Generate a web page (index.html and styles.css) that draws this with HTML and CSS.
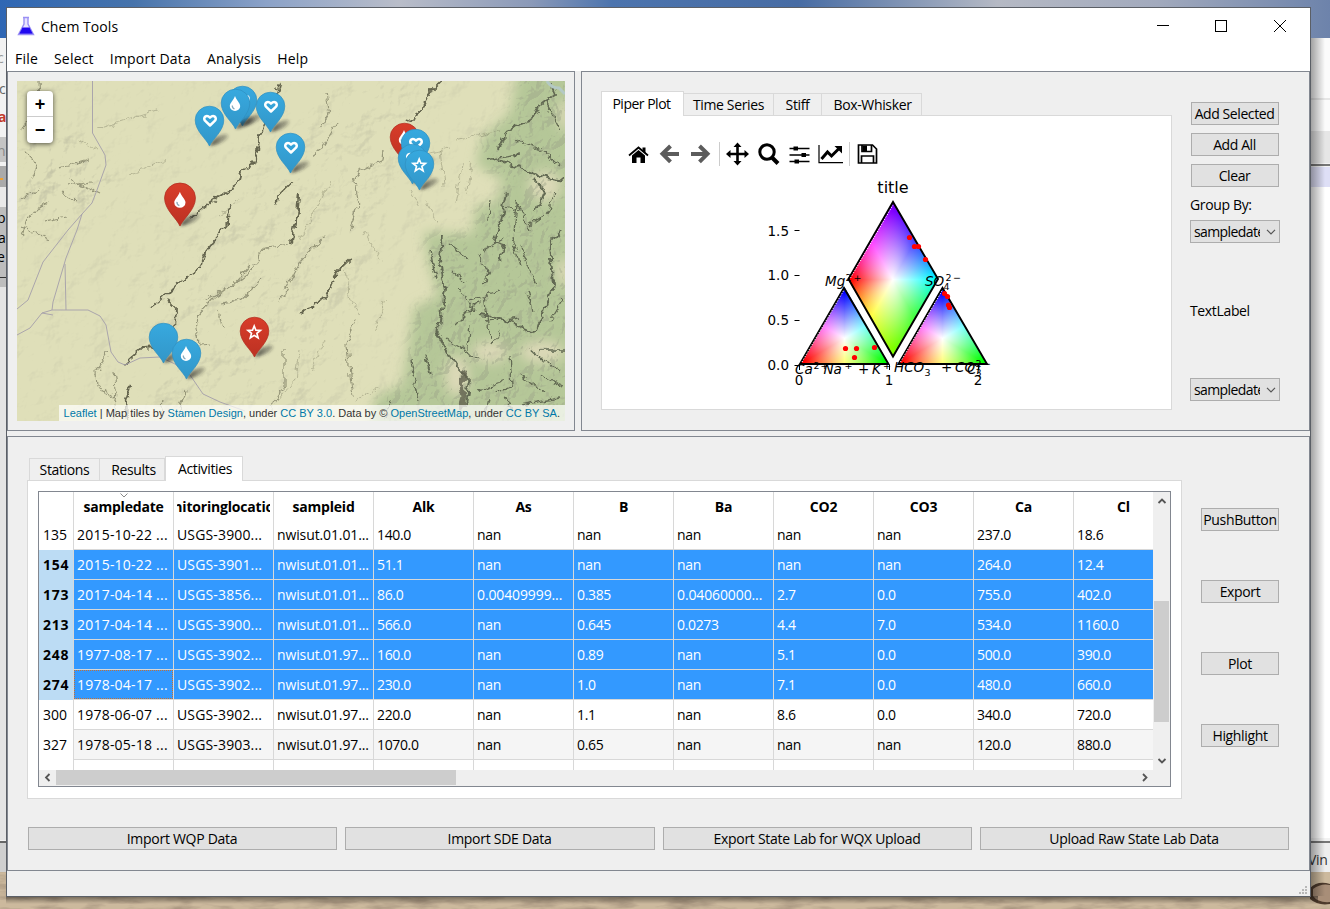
FILE: index.html
```html
<!DOCTYPE html>
<html lang="en">
<head>
<meta charset="utf-8">
<title>Chem Tools</title>
<link rel="stylesheet" href="styles.css">
</head>
<body>
<div class="desktop">
<svg class="backdrop" width="1330" height="909" viewBox="0 0 1330 909">
  <defs>
    <linearGradient id="sky"><stop offset="0" stop-color="#2f67b4"/><stop offset=".1" stop-color="#4673ab"/><stop offset=".2" stop-color="#8ba2c8"/><stop offset=".3" stop-color="#b9bdc9"/><stop offset=".4" stop-color="#8a99b8"/><stop offset=".46" stop-color="#4c74ae"/><stop offset=".6" stop-color="#476ca4"/><stop offset=".75" stop-color="#b5b9c4"/><stop offset=".87" stop-color="#a2aabd"/><stop offset="1" stop-color="#6d83ab"/></linearGradient>
    <filter id="sandTex" x="0" y="0" width="100%" height="100%"><feTurbulence type="fractalNoise" baseFrequency=".03 .12" numOctaves="4" seed="8"/><feColorMatrix values="0 0 0 0 .4  0 0 0 0 .31  0 0 0 0 .22  2.4 0 0 0 -1"/></filter>
    <linearGradient id="shR"><stop offset="0" stop-color="#000" stop-opacity=".38"/><stop offset="1" stop-color="#000" stop-opacity="0"/></linearGradient>
    <linearGradient id="shB" x2="0" y2="1"><stop offset="0" stop-color="#000" stop-opacity=".45"/><stop offset="1" stop-color="#000" stop-opacity="0"/></linearGradient>
  </defs>
  <rect width="1330" height="38" fill="url(#sky)"/>
  <rect y="38" width="1330" height="835" fill="#f2f2f2"/>
  <rect y="137" width="10" height="25" fill="#c4c4c4"/><rect y="166" width="10" height="21" fill="#aaa"/>
  <rect y="187" width="10" height="20" fill="#e9e9e9"/><rect y="207" width="10" height="80" fill="#bdbdbd"/>
  <rect y="287" width="10" height="553" fill="#e4e4e4"/><rect y="841" width="10" height="2" fill="#666"/><rect y="843" width="10" height="29" fill="#cfcfcf"/>
  <rect x="1310" y="38" width="20" height="93" fill="#fbfbfb"/><rect x="1310" y="98" width="20" height="2" fill="#e6e6e6"/>
  <rect x="1310" y="131" width="20" height="32" fill="#e6e6e6"/><rect x="1310" y="164" width="20" height="2" fill="#777"/>
  <rect x="1310" y="167" width="20" height="20" fill="#dedff6"/><rect x="1310" y="187" width="20" height="651" fill="#fff"/>
  <rect x="1310" y="841" width="20" height="2" fill="#777"/><rect x="1310" y="843" width="20" height="29" fill="#eee"/>
  <rect y="872" width="1330" height="37" fill="#ccb99d"/><rect y="872" width="1330" height="37" filter="url(#sandTex)"/>
  <path d="M1310 888q8-8 20-4v20q-12 2-20-5z" fill="#4d3a2c"/><path d="M1313 889q8-6 17-4v17q-12 1-17-6z" fill="#a88e78"/>
  <g font-family="Open Sans, sans-serif" font-size="14"><text x="-3" y="63" fill="#999">c</text><text x="-1" y="94" fill="#666">c</text><text x="-2" y="122" fill="#c23b2e" font-weight="700">a</text><text x="-3" y="156" fill="#888">n</text><text x="-3" y="223">p</text><text x="-2" y="243">a</text><text x="-3" y="262">e</text><text x="1308" y="865" fill="#333">Vin</text></g>
  <rect x="0" y="178" width="3" height="2" fill="#f0a030"/><rect y="277" width="6" height="1" fill="#333"/>
  <rect x="1310" y="38" width="15" height="858" fill="url(#shR)"/><rect x="6" y="896" width="1312" height="8" fill="url(#shB)"/>
</svg>

<div class="window">
  <header class="titlebar">
    <svg class="flask" width="18" height="20" viewBox="0 0 18 20"><path d="M6 1.500h6M7 2v6L1.500 18.500h15L11 8V2" fill="#e8e4ff" stroke="#9a90f4" stroke-width="1.400"/><path d="M5.500 11.500h7l3.200 6.200H2.300z" fill="#2008f0"/></svg>
    <span class="caption">Chem Tools</span>
    <svg class="winbtns" width="130" height="14" viewBox="0 0 130 14" fill="none" stroke="#000" stroke-width="1"><path d="M0 6.500h12"/><rect x="58.500" y="1.500" width="11" height="11"/><path d="M117 1l12 12M129 1l-12 12"/></svg>
  </header>
  <nav class="menubar"><span>File</span><span>Select</span><span>Import Data</span><span>Analysis</span><span>Help</span></nav>

  <div class="top-split">
    <section class="frame map-frame">
      <div class="map">
      <svg width="548" height="340" viewBox="17 81 548 340">
        <defs>
          <filter id="soft" x="-20%" y="-20%" width="140%" height="140%"><feGaussianBlur stdDeviation="6"/></filter>
          <filter id="relief" x="0" y="0" width="100%" height="100%"><feTurbulence type="fractalNoise" baseFrequency=".03" numOctaves="5" seed="14"/><feColorMatrix values="0 0 0 0 0 0 0 0 0 0 0 0 0 0 0 1 0 0 0 0"/><feDiffuseLighting surfaceScale="6" lighting-color="#fff" result="l"><feDistantLight azimuth="225" elevation="50"/></feDiffuseLighting><feColorMatrix values="0 0 0 0 .36 0 0 0 0 .36 0 0 0 0 .28 -3 0 0 0 2.1"/></filter>
          <filter id="relief2" x="0" y="0" width="100%" height="100%"><feTurbulence type="turbulence" baseFrequency=".045 .04" numOctaves="4" seed="21"/><feColorMatrix values="0 0 0 0 0 0 0 0 0 0 0 0 0 0 0 1 0 0 0 0"/><feDiffuseLighting surfaceScale="8" lighting-color="#fff"><feDistantLight azimuth="215" elevation="52"/></feDiffuseLighting><feColorMatrix values="0 0 0 0 .33 0 0 0 0 .36 0 0 0 0 .25 -3.5 0 0 0 1.75"/></filter>
          <filter id="rough" x="-5%" y="-5%" width="110%" height="110%"><feTurbulence type="fractalNoise" baseFrequency=".12" numOctaves="3" seed="3"/><feDisplacementMap in="SourceGraphic" scale="9" xChannelSelector="R" yChannelSelector="G"/><feGaussianBlur stdDeviation=".45"/></filter>
          <filter id="blur2" x="-40%" y="-60%" width="180%" height="220%"><feGaussianBlur stdDeviation="1.700"/></filter>
          <mask id="greenMask"><use href="#forest" fill="#fff" filter="url(#soft)"/></mask>
          <mask id="westMask"><g fill="#fff" filter="url(#soft)"><path d="M17 215h35l55-10 5-35-40-35-55 10z"/><path d="M150 421V290L300 130l60-49h60l-40 140-60 200z" opacity=".4"/></g></mask>
          <path id="forest" d="M518 70L510 112 482 138 476 165 503 180 495 202 476 207 472 234 424 232 428 262 438 296 414 308 402 385 376 396 368 430H575V70z"/>
          <linearGradient id="gb" x2="0" y2="1"><stop offset="0" stop-color="#37a9df"/><stop offset="1" stop-color="#3296c8"/></linearGradient>
          <linearGradient id="gr" x2="0" y2="1"><stop offset="0" stop-color="#d83d2a"/><stop offset="1" stop-color="#bc3122"/></linearGradient>
          <linearGradient id="gs"><stop offset="0" stop-color="#222" stop-opacity=".75"/><stop offset="1" stop-color="#222" stop-opacity=".2"/></linearGradient>
          <g id="shade"><path d="M0 0Q5-11 16-12 22-11 16-6 9-1 0 0z" fill="url(#gs)" filter="url(#blur2)"/></g>
          <path id="pin" d="M0 0C-3-7-14.300-15-14.300-26A14.300 13.800 0 0 1 14.300-26C14.300-15 3-7 0 0z"/>
          <g id="blue"><use href="#shade"/><use href="#pin" fill="url(#gb)" stroke="#2f8fc0" stroke-width=".7"/></g>
          <g id="red"><use href="#shade"/><use href="#pin" fill="url(#gr)" stroke="#b02d20" stroke-width=".7"/></g>
          <path id="heart" d="M.5-20.500L-4.500-25.300C-7-28.500-3-32 .5-28.300 4-32 8-28.500 5.500-25.300z" fill="none" stroke="#fff" stroke-width="2.500" stroke-linejoin="round"/>
          <g id="drop"><path d="M-.5-33C1-28.500 4.700-26 4.700-23A5.200 5 0 0 1-5.700-23C-5.700-26-2-28.500-.5-33z" fill="#fff"/><path d="M-3.200-23.500Q-3.400-21-1-20" fill="none" stroke="#8ab" stroke-width="1.200"/></g>
          <path id="star" d="M-.3-31L1.400-26.800 5.900-26.500 2.400-23.600 3.600-19.200-.3-21.600-4.200-19.200-3-23.600-6.500-26.500-2-26.800z" fill="none" stroke="#fff" stroke-width="1.700"/>
        </defs>
        <rect x="17" y="81" width="548" height="340" fill="#dfdfb9"/>
        <use href="#forest" fill="#b5c798" filter="url(#soft)"/>
        <g fill="#dcd9b7" filter="url(#soft)"><ellipse cx="545" cy="186" rx="16" ry="15"/><ellipse cx="490" cy="352" rx="18" ry="11"/><ellipse cx="542" cy="352" rx="22" ry="11"/><ellipse cx="564" cy="272" rx="7" ry="14"/><ellipse cx="457" cy="376" rx="12" ry="20"/><ellipse cx="564" cy="115" rx="6" ry="16"/></g>
        <rect x="17" y="81" width="548" height="340" filter="url(#relief)" opacity=".14"/>
        <g mask="url(#westMask)"><rect x="17" y="81" width="548" height="340" filter="url(#relief)" opacity=".3"/></g>
        <g mask="url(#greenMask)"><rect x="17" y="81" width="548" height="340" filter="url(#relief2)" opacity=".42"/></g>
        <g fill="none" stroke="#66664f" stroke-linejoin="round" filter="url(#rough)">
          <g stroke-width="1.900"><path d="M280 83L276 98 263 125 259 140 258 152 252 165 240 172 236 186 226 192 211 202 199 211 191 218"/><path d="M229 205L228 224 206 250 200 268 181 281 161 300 151 308"/><path d="M441 81L432 90 421 112 408 121"/><path d="M351 259L336 273 325 298 302 313"/><path d="M292 182L278 196 275 206"/><path d="M299 194L297 217 291 245" stroke-width="2.500"/><path d="M124 364L142 348 156 347"/><path d="M168 300L176 308 175 330"/><path d="M131 386L126 400 127 419" stroke-width="2.500"/></g>
          <g stroke-width="1.200" opacity=".6"><path d="M384 151L383 160 361 170 355 181 359 206 349 230"/><path d="M336 124L322 148 311 156"/><path d="M326 94L330 113 320 128"/><path d="M109 353L96 372 97 386 114 397"/><path d="M114 370L116 390 113 419"/><path d="M290 245L265 248 252 270 215 297 196 318 199 345 212 344"/><path d="M355 318L347 345 350 375 353 395"/><path d="M284 350L284 387 273 405"/><path d="M40 81L41 103 30 115 22 131"/><path d="M24 151L38 165 32 180M70 180L100 194M48 202L30 215 22 235M62 192L75 200M60 168L88 160M20 200L40 190M45 222L68 218M20 225L48 240M66 186L92 182"/><path d="M185 391L180 410M162 400L159 421M262 280L240 300 222 304M250 265L232 285 205 300M218 310L222 330M325 235L300 262 280 300"/></g>
          <g stroke-width="1" opacity=".35"><path d="M455 140L500 130M462 165L456 205M472 160L466 195M440 150L444 185M425 200L438 222M405 160L450 148M420 205L410 190M345 270L350 300 360 315M385 300L375 330M365 230L380 260M240 200L220 215M300 350L296 380 270 410M310 370L325 340M355 400L380 388M330 180L300 240M100 128L160 110M128 175L165 160M80 140L96 150"/></g>
        </g>
        <g fill="none" stroke="#626952" stroke-width="1.900" filter="url(#rough)"><path d="M551 83L555 94 538 107 531 120 506 130 498 150M506 193L500 222 494 242 505 245 498 260M534 180L545 190 536 211M500 160L540 176 563 181M442 235L440 260 445 290 438 335 455 365 470 380 466 405M562 230L550 245 553 285 541 320 533 332 505 320 480 315"/>
        <path stroke-width="1.300" d="M520 245L536 285M484 295L490 340M510 355L512 385 495 392M470 300L500 290M565 350L540 350M490 200L488 220M515 200L530 230M478 255L490 275 482 285M520 265L512 240M450 245L470 260M452 270L466 282M455 325L480 300M500 330L492 345M530 350L560 372M520 375L545 392M480 390L505 380M520 405L560 398M448 340L480 360M425 355L432 375M410 360L418 400M390 400L384 418M545 100L560 130M515 140L540 150M485 160L520 155M545 215L530 225M560 165L540 150M517 205L514 232M527 290L532 312M460 290L474 310M470 325L468 350M484 250L505 238M505 205L525 215M555 195L548 215M550 320L562 300M486 322L520 318M488 400L484 418M540 375L562 385M430 250L436 280M505 395L512 412"/></g>
        <path d="M466 370L461 382 464 396 460 410" fill="none" stroke="#626250" stroke-width="5" opacity=".8" filter="url(#rough)"/>
        <g fill="none" stroke="#aaa5ac" stroke-width="1"><path d="M92.500 81V133L105 155 106 165 97 190 92 203 82 214 68 230 43 262 28 300 17 309M82 214L77 230 66 258 53 302 52 310M65 264L66 310M17 335L30 328 42 313 52 310H88L100 316 106 325 111 352 118 362 125 365 140 358 160 357 175 364 190 375 203 394 220 402 245 411M42 313L53 315"/></g>
        <path d="M547 81q4 7 12 7l6 6" fill="none" stroke="#b4c9c4" stroke-width="3"/>
        <g transform="translate(209.500 146)"><use href="#blue"/><use href="#heart"/></g>
        <g transform="translate(242.500 126)"><use href="#blue"/><use href="#heart"/></g>
        <g transform="translate(235.500 129)"><use href="#blue"/><use href="#drop"/></g>
        <g transform="translate(270.500 132)"><use href="#blue"/><use href="#heart"/></g>
        <g transform="translate(290.500 173)"><use href="#blue"/><use href="#heart"/></g>
        <g transform="translate(404.500 163)"><use href="#red"/><use href="#drop"/></g>
        <g transform="translate(415.500 169)"><use href="#blue"/><use href="#heart"/></g>
        <g transform="translate(412.500 184)"><use href="#blue"/><use href="#heart"/></g>
        <g transform="translate(419.500 190)"><use href="#blue"/><use href="#star"/></g>
        <g transform="translate(180 226) scale(1.080)"><use href="#red"/><g transform="translate(.4 1.200)"><use href="#drop"/></g></g>
        <g transform="translate(163.500 363)"><use href="#blue"/></g>
        <g transform="translate(186.500 379)"><use href="#blue"/><use href="#drop"/></g>
        <g transform="translate(254.500 357)"><use href="#red"/><use href="#star"/></g>
      </svg>
      <div class="zoom"><b>+</b><b>−</b></div>
      <div class="attribution"><a>Leaflet</a> | Map tiles by <a>Stamen Design</a>, under <a>CC BY 3.0</a>. Data by © <a>OpenStreetMap</a>, under <a>CC BY SA</a>.</div>
      </div>
    </section>

    <section class="frame plot-frame">
      <div class="plot-tabs">
        <div class="tabs"><span class="tab active t1">Piper Plot</span><span class="tab t2">Time Series</span><span class="tab t3">Stiff</span><span class="tab t4">Box-Whisker</span></div>
        <div class="pane plot-pane">
          <div class="toolbar">
            <svg width="31" height="26" viewBox="-15.500 -13 31 26"><path d="M-9.500 1.500L0-6.500 9.500 1.500" fill="none" stroke="#000" stroke-width="1.800"/><path d="M-6.500 1.500L0-4 6.500 1.500V9H2V3.500h-4V9h-4.500zM4-6.500h3V-.5L4-3z"/></svg>
            <svg width="31" height="26" viewBox="-15.500 -13 31 26"><path d="M9.500 0H-6M1-8L-7-.2 1 7.800" fill="none" stroke="#5c5c5c" stroke-width="4"/></svg>
            <svg width="31" height="26" viewBox="-15.500 -13 31 26"><path d="M-9.500 0H6M-1-8L7-.2-1 7.800" fill="none" stroke="#5c5c5c" stroke-width="4"/></svg>
            <i></i>
            <svg width="31" height="26" viewBox="-15.500 -13 31 26"><path d="M0-8V8M-8 0H8" stroke="#000" stroke-width="2.600"/><path d="M0-11.500l4 4.500h-8zM0 11.500l4-4.500h-8zM-11.500 0l4.500-4v8zM11.500 0L7-4v8z"/></svg>
            <svg width="31" height="26" viewBox="-15.500 -13 31 26" fill="none" stroke="#000"><circle cx="-1.500" cy="-2" r="7.200" stroke-width="3"/><path d="M3.500 3.500L9.500 9.500" stroke-width="4"/></svg>
            <svg width="31" height="26" viewBox="-15.500 -13 31 26"><path d="M-10-5.500H10M-10 1H10M-10 7.500H10" stroke="#000" stroke-width="1.600"/><path d="M-6-7.500h4.500v4H-6zM2-1h4.500v4H2zM-5 5.500h4.500v4H-5z"/></svg>
            <svg width="31" height="26" viewBox="-15.500 -13 31 26"><path d="M-11.500-9V8.700H12.500" fill="none" stroke="#000" stroke-width="1.200"/><path d="M-9 5L-3-2 1 2 8-5" fill="none" stroke="#000" stroke-width="3"/><path d="M4-8h7.500v7.500z"/></svg>
            <i></i>
            <svg width="31" height="26" viewBox="-15.500 -13 31 26" fill="none" stroke="#000" stroke-width="1.700"><path d="M-9-9H5L9-5V9H-9zM-6 9V2H6V9"/><path d="M-5.500-9v6.500H4V-9"/><path d="M-5-8.500h4.500v5.500H-5z" fill="#000" stroke="none"/></svg>
          </div>
          <svg width="569" height="239" viewBox="602 170 569 239">
            <foreignObject x="800" y="287" width="89" height="77"><div class="tri"></div></foreignObject>
            <foreignObject x="898" y="287" width="89" height="77"><div class="tri"></div></foreignObject>
            <foreignObject x="848" y="202" width="90" height="155"><div class="diamond"></div></foreignObject>
            <g fill="none" stroke="#000" stroke-width="1.900"><path d="M800 364L844 288 888.500 364z"/><path d="M898.500 364L942.500 288 987 364z"/><path d="M848.500 279L893 202 938 279 893 356.500z"/></g>
            <g fill="none" stroke="#fff" stroke-width="1" stroke-dasharray="1.200 1.600"><path d="M802 362L844 290M900.500 362L942.500 290M850.500 278L893 205"/></g>
            <g fill="red"><circle cx="909.500" cy="237.500" r="2.600"/><circle cx="914.500" cy="246.500" r="2.600"/><circle cx="918.500" cy="246.500" r="2.600"/><circle cx="925.500" cy="259.500" r="2.600"/><circle cx="944.500" cy="293.500" r="2.600"/><circle cx="947.500" cy="296.500" r="2.600"/><circle cx="948.500" cy="305" r="2.600"/><circle cx="949.500" cy="307.500" r="2.600"/><circle cx="845.500" cy="348.500" r="2.600"/><circle cx="856.500" cy="348.500" r="2.600"/><circle cx="874.500" cy="347.500" r="2.600"/><circle cx="854.500" cy="357.500" r="2.600"/></g>
            <path d="M794.500 230.500h5M794.500 275.500h5M794.500 320.500h5M794.500 365.500h5M799.500 365v5M889.500 365v5M978.500 365v5" stroke="#000"/>
            <g class="ticks"><text x="789" y="236" text-anchor="end">1.5</text><text x="789" y="280" text-anchor="end">1.0</text><text x="789" y="325" text-anchor="end">0.5</text><text x="789" y="370" text-anchor="end">0.0</text><text x="799" y="385" text-anchor="middle">0</text><text x="889" y="385" text-anchor="middle">1</text><text x="978" y="385" text-anchor="middle">2</text><text class="ttl" x="893" y="193" text-anchor="middle">title</text></g>
            <g class="math">
              <text x="825" y="286">Mg</text><text class="s" x="845.500" y="281">2</text><text class="s" x="853.500" y="281">+</text>
              <text x="925" y="286">SO</text><text class="s" x="945.500" y="281">2</text><text class="s" x="953" y="281">−</text><text class="s" x="943.500" y="290">4</text>
              <text x="795" y="374">Ca</text><text class="s" x="813.500" y="369">2</text><text class="s" x="820.500" y="369">+</text>
              <text x="823.500" y="374">Na</text><text class="s" x="844.500" y="369">+</text><text x="858" y="374">+</text><text x="872" y="374">K</text><text class="s" x="883" y="369">+</text>
              <text x="894" y="372">HCO</text><text class="s" x="926" y="367">−</text><text class="s" x="924.500" y="376">3</text><text x="941" y="372">+</text><text x="955" y="372">CO</text><text class="s" x="975.500" y="367">2−</text><text class="s" x="975.500" y="376">3</text>
              <text x="967" y="374">Cl</text><text class="s" x="983" y="367">−</text>
            </g>
          </svg>
        </div>
      </div>
      <div class="side">
        <button>Add Selected</button><button>Add All</button><button>Clear</button>
        <label class="group">Group By:</label>
        <div class="combo"><span>sampledate</span><svg width="10" height="6" viewBox="0 0 10 6"><path d="M1 .8L5 4.800 9 .8" fill="none" stroke="#555" stroke-width="1.200"/></svg></div>
        <label class="textlabel">TextLabel</label>
        <div class="combo"><span>sampledate</span><svg width="10" height="6" viewBox="0 0 10 6"><path d="M1 .8L5 4.800 9 .8" fill="none" stroke="#555" stroke-width="1.200"/></svg></div>
      </div>
    </section>
  </div>

  <section class="frame data-frame">
    <div class="data-main">
      <div class="data-tabs">
        <div class="tabs"><span class="tab d1">Stations</span><span class="tab d2">Results</span><span class="tab active d3">Activities</span></div>
        <div class="pane data-pane">
          <div class="grid">
            <div class="view">
              <div class="row head"><b></b><b class="sorted">sampledate<svg width="8" height="5" viewBox="0 0 8 5"><path d="M.5 .5L4 4 7.500 .5" fill="none" stroke="#888"/></svg></b><b><em>monitoringlocationid</em></b><b>sampleid</b><b>Alk</b><b>As</b><b>B</b><b>Ba</b><b>CO2</b><b>CO3</b><b>Ca</b><b>Cl</b></div>
              <div class="row"><b>135</b><span class="date">2015-10-22 ...</span><span class="loc">USGS-3900...</span><span class="sid">nwisut.01.01...</span><span>140.0</span><span>nan</span><span>nan</span><span>nan</span><span>nan</span><span>nan</span><span>237.0</span><span>18.6</span></div>
              <div class="row sel"><b>154</b><span class="date">2015-10-22 ...</span><span class="loc">USGS-3901...</span><span class="sid">nwisut.01.01...</span><span>51.1</span><span>nan</span><span>nan</span><span>nan</span><span>nan</span><span>nan</span><span>264.0</span><span>12.4</span></div>
              <div class="row sel"><b>173</b><span class="date">2017-04-14 ...</span><span class="loc">USGS-3856...</span><span class="sid">nwisut.01.01...</span><span>86.0</span><span class="sid">0.00409999...</span><span>0.385</span><span class="sid">0.04060000...</span><span>2.7</span><span>0.0</span><span>755.0</span><span>402.0</span></div>
              <div class="row sel"><b>213</b><span class="date">2017-04-14 ...</span><span class="loc">USGS-3900...</span><span class="sid">nwisut.01.01...</span><span>566.0</span><span>nan</span><span>0.645</span><span>0.0273</span><span>4.4</span><span>7.0</span><span>534.0</span><span>1160.0</span></div>
              <div class="row sel"><b>248</b><span class="date">1977-08-17 ...</span><span class="loc">USGS-3902...</span><span class="sid">nwisut.01.97...</span><span>160.0</span><span>nan</span><span>0.89</span><span>nan</span><span>5.1</span><span>0.0</span><span>500.0</span><span>390.0</span></div>
              <div class="row sel"><b>274</b><span class="date focus">1978-04-17 ...</span><span class="loc">USGS-3902...</span><span class="sid">nwisut.01.97...</span><span>230.0</span><span>nan</span><span>1.0</span><span>nan</span><span>7.1</span><span>0.0</span><span>480.0</span><span>660.0</span></div>
              <div class="row"><b>300</b><span class="date">1978-06-07 ...</span><span class="loc">USGS-3902...</span><span class="sid">nwisut.01.97...</span><span>220.0</span><span>nan</span><span>1.1</span><span>nan</span><span>8.6</span><span>0.0</span><span>340.0</span><span>720.0</span></div>
              <div class="row alt"><b>327</b><span class="date">1978-05-18 ...</span><span class="loc">USGS-3903...</span><span class="sid">nwisut.01.97...</span><span>1070.0</span><span>nan</span><span>0.65</span><span>nan</span><span>nan</span><span>nan</span><span>120.0</span><span>880.0</span></div>
              <div class="row"><b></b><span></span><span></span><span></span><span></span><span></span><span></span><span></span><span></span><span></span><span></span><span></span></div>
            </div>
            <div class="vbar"><svg width="16" height="18" viewBox="0 0 16 18"><path d="M4.500 11L8 7.500l3.500 3.500" fill="none" stroke="#555" stroke-width="1.800"/></svg><div class="vthumb"></div><svg width="16" height="17" viewBox="0 0 16 17"><path d="M4.500 6L8 9.500 11.500 6" fill="none" stroke="#555" stroke-width="1.800"/></svg></div>
            <div class="hbar"><svg width="17" height="16" viewBox="0 0 17 16"><path d="M10.500 4L7 7.500 10.500 11" fill="none" stroke="#555" stroke-width="1.800"/></svg><div class="hthumb"></div><svg width="17" height="16" viewBox="0 0 17 16"><path d="M6 4l3.500 3.500L6 11" fill="none" stroke="#555" stroke-width="1.800"/></svg></div>
          </div>
        </div>
      </div>
      <div class="actions"><button>PushButton</button><button>Export</button><button>Plot</button><button>Highlight</button></div>
    </div>
    <div class="imports"><button>Import WQP Data</button><button>Import SDE Data</button><button>Export State Lab for WQX Upload</button><button>Upload Raw State Lab Data</button></div>
  </section>
  <footer class="status"><svg width="9" height="9" viewBox="0 0 9 9" fill="#b8b8b8"><path d="M6 0h2v2H6zM3 3h2v2H3zM6 3h2v2H6zM0 6h2v2H0zM3 6h2v2H3zM6 6h2v2H6z"/></svg></footer>
</div>
</div>
</body>
</html>
```
FILE: styles.css
```css
* { box-sizing: border-box; }
body { margin: 0; font: 14px/20px "Open Sans", "Noto Sans", sans-serif; color: #000; letter-spacing: -0.35px; overflow: hidden; }
svg { display: block; flex: none; }
.desktop { display: grid; width: 1330px; height: 909px; }
.backdrop, .window { grid-area: 1 / 1; }
.window { z-index: 1; margin: 7px 0 0 6px; width: 1305px; height: 890px; border: 1px solid #5b5f66; background: #efefef; display: flex; flex-direction: column; }

.titlebar { height: 38px; background: #fff; display: flex; align-items: center; padding: 0 23px 0 10px; }
.flask { margin-top: -2px; }
.caption { margin-left: 6px; letter-spacing: 0.05px; flex: 1; }
.winbtns { margin-top: -2px; }
.menubar { height: 25px; background: #fff; display: flex; gap: 16px; padding: 3px 0 0 8px; letter-spacing: 0.2px; }

.frame { border: 1px solid #828790; background: #efefef; }
.top-split { display: flex; gap: 6px; height: 360px; }
.map-frame { width: 568px; padding: 9px; }
.map { position: relative; width: 548px; height: 340px; overflow: hidden; }
.zoom { position: absolute; left: 10px; top: 10px; width: 26px; height: 52px; background: #fff; border-radius: 4px; box-shadow: 0 1px 5px rgba(0,0,0,.65); }
.zoom b { display: block; height: 26px; font: bold 18px/26px "Liberation Sans", sans-serif; letter-spacing: 0; text-align: center; }
.zoom b:first-child { border-bottom: 1px solid #ccc; }
.attribution { position: absolute; right: 0; bottom: 0; height: 16px; padding: 0 5px; background: rgba(255,255,255,.7); font: 11px/16px "Liberation Sans", sans-serif; letter-spacing: 0.01px; color: #333; white-space: nowrap; }
.attribution a { color: #0078a8; }

.plot-frame { width: 729px; padding: 19px 0 0 19px; display: flex; gap: 18px; }
.plot-tabs { width: 571px; }
.tabs { display: flex; align-items: flex-end; height: 25px; position: relative; z-index: 1; margin-bottom: -1px; }
.tab { height: 22px; margin-bottom: 1px; border: 1px solid #d9d9d9; border-width: 1px 1px 0 0; text-align: center; line-height: 21px; white-space: nowrap; }
.tab.active { height: 25px; margin-bottom: 0; background: #fff; border-left-width: 1px; line-height: 24px; }
.t1 { width: 83px; padding-right: 2px; letter-spacing: -0.5px; } .t2 { width: 90px; } .t3 { width: 48px; } .t4 { width: 100px; padding-left: 2px; }
.pane { background: #fff; border: 1px solid #d9d9d9; }
.plot-pane { height: 295px; }
.toolbar { display: flex; align-items: center; height: 54px; padding: 21px 0 0 21px; }
.toolbar i { width: 1px; height: 24px; margin: 0 2px 0 3px; background: #ccc; }
.ticks { font: 13.500px "DejaVu Sans", sans-serif; letter-spacing: 0; }
.ticks .ttl { font-size: 16px; }
.math { font: italic 13.500px "DejaVu Sans", sans-serif; letter-spacing: 0; }
.math .s { font-size: 9.500px; font-style: normal; }
.tri { width: 89px; height: 77px; clip-path: polygon(0 100%, 50% 0, 100% 100%); background: radial-gradient(circle at 50% 66.700%, #fff, rgba(255,255,255,0) 46px), conic-gradient(from 0deg at 50% 66.700%, #00f, #0ff, #0f0, #ff0, #f00, #f0f, #00f); }
.diamond { width: 90px; height: 155px; clip-path: polygon(50% 0, 100% 50%, 50% 100%, 0 50%); background: radial-gradient(ellipse 42px 68px at 50% 50%, #fff, rgba(255,255,255,0)), conic-gradient(#8000ff, #00f 30deg, #0080ff 60deg, #0ff 90deg, #00ff80 120deg, #0f0 150deg, #80ff00 180deg, #ff0 210deg, #ff8000 240deg, #f00 270deg, #ff0080 300deg, #f0f 330deg, #8000ff 360deg); }

button { display: block; height: 23px; padding: 0; border: 1px solid #adadad; border-radius: 0; background: #e1e1e1; color: #000; font: inherit; line-height: 21px; letter-spacing: inherit; white-space: nowrap; }
.side { width: 90px; padding-top: 11px; display: flex; flex-direction: column; }
.side button { width: 88px; margin: 0 0 8px 1px; padding-right: 1px; letter-spacing: -0.42px; }
.group { margin: 0 0 5px; }
.combo { width: 90px; height: 23px; border: 1px solid #adadad; background: #e1e1e1; display: flex; align-items: center; justify-content: space-between; padding: 0 3px 0 3px; }
.combo span { width: 66px; overflow: hidden; line-height: 21px; letter-spacing: -0.6px; }
.textlabel { margin: 58px 0 57px; }

.data-frame { margin-top: 5px; height: 435px; padding: 19px 20px 0; }
.data-main { display: flex; gap: 19px; }
.data-tabs { width: 1155px; margin-left: -1px; }
.data-tabs .tabs { padding-left: 2px; }
.data-tabs .tab:first-child { border-left-width: 1px; }
.d1 { width: 71px; } .d2 { width: 65px; padding-left: 3px; } .d3 { width: 78px; padding-left: 2px; }
.data-pane { height: 319px; padding: 10px; }
.grid { width: 1133px; height: 296px; border: 1px solid #828790; display: grid; grid-template: 278px 16px / 1115px 16px; background: #efefef; }
.view { overflow: hidden; background: #fff; border-right: 1px solid #efefef; }
.row { display: flex; width: 1135px; height: 30px; }
.row > * { flex: none; width: 100px; height: 30px; padding-left: 3px; border-right: 1px solid #d8d8d8; border-bottom: 1px solid #d8d8d8; line-height: 30px; overflow: hidden; white-space: nowrap; }
.row > .date { letter-spacing: 0.22px; }
.row > .loc { letter-spacing: 0.15px; }
.row > .sid { letter-spacing: -0.12px; }
.row > b:first-child { width: 35px; padding: 0 0 0 4px; border-bottom: 0; font-weight: 400; letter-spacing: 0; }
.head, .head > * { height: 28px; }
.head > * { border-bottom: 0; padding: 0; text-align: center; letter-spacing: -0.2px; }
.head em { font-style: normal; margin: 0 3px; height: 27px; display: flex; justify-content: center; overflow: hidden; }
.sorted { position: relative; }
.sorted svg { position: absolute; left: 46px; top: 1px; }
.sel > span { background: #3399ff; color: #fff; }
.row.sel > b:first-child { background: #bcdcf4; font-weight: 700; letter-spacing: 0.7px; }
.alt > span { background: #f5f5f5; }
.focus { position: relative; }
.focus::after { content: ""; position: absolute; inset: 0; border: 1px dotted #c07038; }
.vbar, .hbar { display: flex; background: #efefef; }
.vbar { flex-direction: column; }
.vthumb { width: 15px; height: 121px; margin: 91px 0 auto; background: #cdcdcd; }
.hthumb { width: 400px; height: 15px; margin-right: auto; background: #cdcdcd; }
.actions { padding-top: 52px; display: flex; flex-direction: column; gap: 49px; }
.actions button { width: 78px; }
.imports { display: grid; grid-template-columns: 309px 310px 309px 309px; gap: 8px; margin-top: 28px; }
.imports button { letter-spacing: -0.28px; padding-right: 1px; }

.status { height: 25px; display: flex; justify-content: flex-end; align-items: flex-end; padding: 0 2px 1px; }
```
